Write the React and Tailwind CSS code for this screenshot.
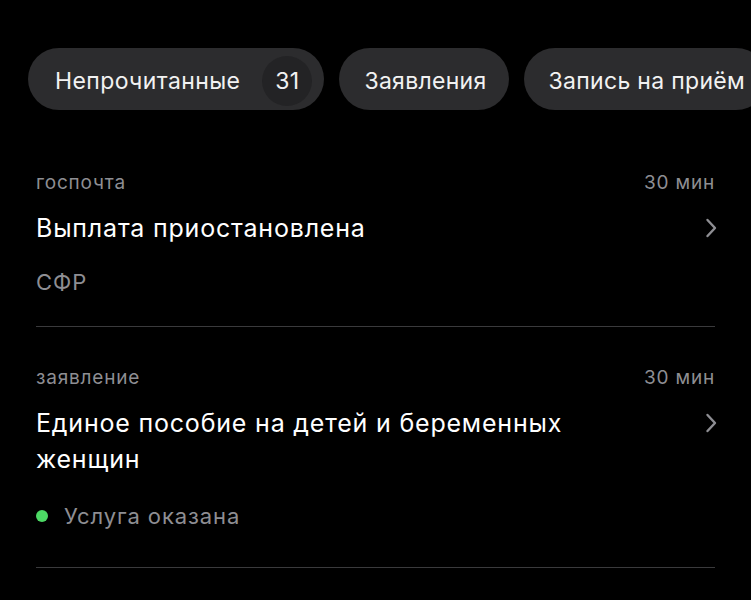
const items = [
  {
    id: 1,
    kind: "госпочта",
    time: "30 мин",
    title: "Выплата приостановлена",
    sub: "СФР",
  },
  {
    id: 2,
    kind: "заявление",
    time: "30 мин",
    title: "Единое пособие на детей и беременных женщин",
    status: "Услуга оказана",
  },
];

function Chevron() {
  return (
    <svg width="12" height="20" viewBox="0 0 12 20" className="shrink-0 mt-[8px] -mr-[2px]">
      <polyline
        points="2.5,2 10,10 2.5,18"
        fill="none"
        stroke="#8e8e93"
        strokeWidth="2.4"
        strokeLinecap="round"
        strokeLinejoin="round"
      />
    </svg>
  );
}

function Chip({ children }) {
  return (
    <div className="shrink-0 flex items-center h-[62px] rounded-full bg-[#2c2c2e] pt-[4px] pl-[25px] pr-[22px] text-[23px] tracking-[0.3px] text-[#f2f2f2] whitespace-nowrap">
      {children}
    </div>
  );
}

export default function App() {
  return (
    <div
      className="w-[751px] h-[600px] overflow-hidden bg-black text-white"
      style={{ fontFamily: "Inter, 'Noto Sans', sans-serif" }}
    >
      <div className="flex gap-[15px] pl-[28px] pt-[48px]">
        <div className="shrink-0 flex items-center h-[62px] rounded-full bg-[#2c2c2e] pt-[4px] pl-[27px] pr-[12px] text-[23px] tracking-[0.4px] text-[#f2f2f2] whitespace-nowrap">
          <span>Непрочитанные</span>
          <span className="ml-[22px] flex items-center justify-center w-[50px] h-[50px] rounded-full bg-[#232325]">
            31
          </span>
        </div>
        <Chip>Заявления</Chip>
        <Chip>Запись на приём</Chip>
      </div>

      <div className="px-[36px] pt-[60px]">
        {/* госпочта */}
        <div className="border-b border-[#3a3a3c] pb-[28px]">
          <div className="flex justify-between text-[19px] tracking-[0.8px] text-[#8e8e93] leading-[26px]">
            <span>{items[0].kind}</span>
            <span>{items[0].time}</span>
          </div>
          <div className="flex items-start justify-between mt-[14px]">
            <div className="text-[25px] tracking-[0.8px] leading-[36px] text-white">{items[0].title}</div>
            <Chevron />
          </div>
          <div className="mt-[20px] text-[22px] tracking-[1px] text-[#8e8e93] leading-[32px]">
            {items[0].sub}
          </div>
        </div>

        {/* заявление */}
        <div className="border-b border-[#3a3a3c] pt-[38px] pb-[35px]">
          <div className="flex justify-between text-[19px] tracking-[0.8px] text-[#8e8e93] leading-[26px]">
            <span>{items[1].kind}</span>
            <span>{items[1].time}</span>
          </div>
          <div className="flex items-start justify-between mt-[14px]">
            <div className="text-[25px] tracking-[0.8px] leading-[36px] text-white max-w-[560px]">
              {items[1].title}
            </div>
            <Chevron />
          </div>
          <div className="mt-[23px] flex items-center text-[22px] tracking-[0.9px] text-[#8e8e93] leading-[32px]">
            <span className="w-[12px] h-[12px] rounded-full bg-[#4cd964] mr-[16px]" />
            {items[1].status}
          </div>
        </div>
      </div>
    </div>
  );
}
